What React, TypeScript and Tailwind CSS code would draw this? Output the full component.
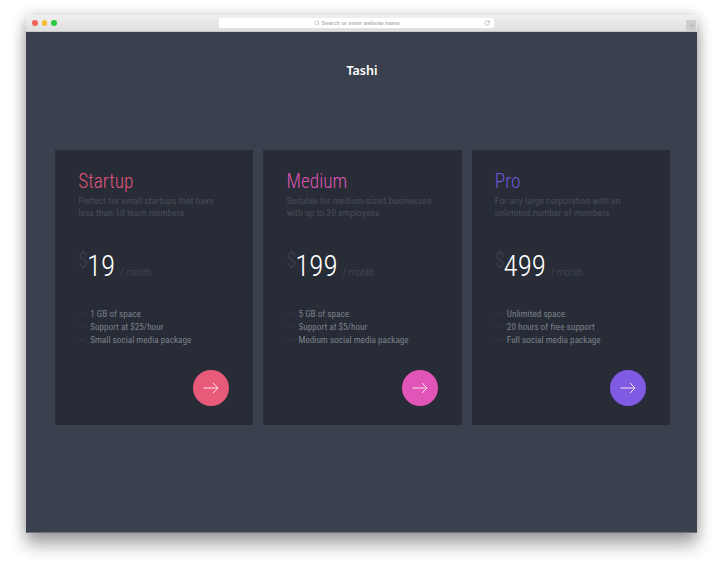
import { Search, RotateCw, Plus } from "lucide-react";

const plans = [
  { name: "Startup", color: "text-[#e0557c]", btn: "bg-[#e85a79]", desc: ["Perfect for small startups that have", "less than 10 team members"], price: "19", items: ["1 GB of space", "Support at $25/hour", "Small social media package"] },
  { name: "Medium", color: "text-[#dc54b2]", btn: "bg-[#e255b8]", desc: ["Suitable for medium-sized businesses", "with up to 30 employees"], price: "199", items: ["5 GB of space", "Support at $5/hour", "Medium social media package"] },
  { name: "Pro", color: "text-[#6f58d8]", btn: "bg-[#7f5ae2]", desc: ["For any large corporation with an", "unlimited number of members"], price: "499", items: ["Unlimited space", "20 hours of free support", "Full social media package"] },
];

function Card({ p }: { p: (typeof plans)[number] }) {
  return (
    <div className="flex h-[275px] flex-1 flex-col bg-[#272c36] pl-[23.2px] pr-6 pt-[20.5px]">
      <div className={`text-[19.3px] font-light leading-[22px] ${p.color}`}>{p.name}</div>
      <div className="mt-[2.5px] whitespace-nowrap text-[9.7px] font-normal leading-[11.5px] text-[#474c58]">
        {p.desc.map((d) => (
          <div key={d}>{d}</div>
        ))}
      </div>
      <div className="mt-[29px] flex h-[36px] items-end">
        <span className="mb-[12px] text-[20px] font-light leading-[22px] text-[#3d424e]">$</span>
        <span className="ml-[-1px] text-[29px] font-light leading-[34px] text-white">{p.price}</span>
        <span className="mb-[3px] ml-[5px] text-[10.2px] font-light leading-[14px] text-[#4c515d]">/ month</span>
      </div>
      <div className="mt-[24px] flex flex-col whitespace-nowrap text-[9.2px] leading-[13px] text-[#7c818b]">
        {p.items.map((i) => (
          <div key={i} className="flex items-center">
            <span className="h-px w-[6px] bg-[#333842]" />
            <span className="ml-[6px]">{i}</span>
          </div>
        ))}
      </div>
      <div className="mt-[24px] flex justify-end">
        <div className={`flex h-9 w-9 items-center justify-center rounded-full ${p.btn}`}>
          <svg width="16" height="12" viewBox="0 0 16 12" fill="none" stroke="#fde3ea" strokeWidth="1">
            <path d="M0.5 6h14.5M10 1l5 5-5 5" />
          </svg>
        </div>
      </div>
    </div>
  );
}

export default function App() {
  return (
    <div className="h-[569px] w-[723px] overflow-hidden bg-white pl-[26px] pt-[15px] font-['Roboto',sans-serif] [font-stretch:75%]">
      <div className="flex h-[518px] w-[671px] flex-col shadow-[0_12px_16px_rgba(0,0,0,0.33),0_0_12px_rgba(0,0,0,0.2)]">
        <div className="relative flex h-[17px] items-center rounded-t-[2px] border-b border-[#c8c8c8] bg-gradient-to-b from-[#f0f0f0] to-[#dfdfdf] pl-[6px]">
          <div className="flex gap-[4px]">
            <span className="h-[5.5px] w-[5.5px] rounded-full bg-[#f4615c]" />
            <span className="h-[5.5px] w-[5.5px] rounded-full bg-[#f7bd2e]" />
            <span className="h-[5.5px] w-[5.5px] rounded-full bg-[#28c73f]" />
          </div>
          <div className="ml-[162px] flex h-[10.5px] w-[275px] items-center rounded-[1px] bg-white">
            <div className="flex flex-1 items-center justify-center gap-[2px] pl-[11px] font-['Liberation_Sans',sans-serif] text-[5.5px] font-bold text-[#b3b3b3] [font-stretch:100%]">
              <Search size={6} strokeWidth={1.5} className="text-[#9a9a9a]" />
              <span>Search or enter website name</span>
            </div>
            <RotateCw size={6} strokeWidth={1.5} className="mr-[4px] text-[#777777]" />
          </div>
          <div className="absolute bottom-0 right-[1px] flex h-[11px] w-[10px] items-center justify-center bg-[#cdcdcd] text-[#8f8f8f]">
            <Plus size={7} strokeWidth={1} />
          </div>
        </div>
        <div className="flex flex-1 flex-col border-b border-[#6f7380] bg-[#3a404e] pl-[29px] pr-[27px]">
          <div className="mt-[31px] h-[16px] pr-[1px] text-center font-['Noto_Sans',sans-serif] text-[12.5px] font-semibold leading-[16px] text-white [font-stretch:100%]">Tashi</div>
          <div className="mt-[71px] flex gap-[10px]">
            {plans.map((p) => (
              <Card key={p.name} p={p} />
            ))}
          </div>
        </div>
      </div>
    </div>
  );
}
